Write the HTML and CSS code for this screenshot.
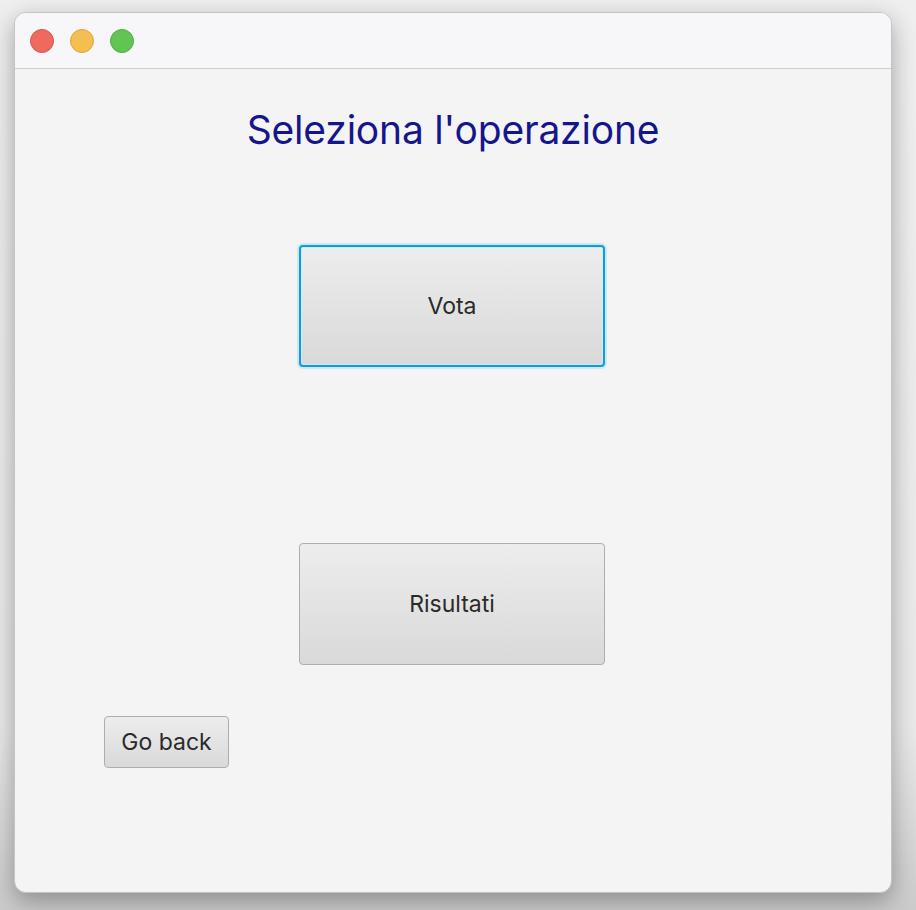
FILE: index.html
```html
<!DOCTYPE html>
<html lang="it">
<head>
<meta charset="utf-8">
<title>Seleziona l'operazione</title>
<link rel="stylesheet" href="styles.css">
</head>
<body>
<div class="window">
  <div class="titlebar">
    <span class="light red"></span>
    <span class="light yellow"></span>
    <span class="light green"></span>
  </div>
  <div class="content">
    <h1 class="heading">Seleziona l'operazione</h1>
    <button class="btn big focused">Vota</button>
    <button class="btn big second">Risultati</button>
    <button class="btn small">Go back</button>
  </div>
</div>
</body>
</html>
```
FILE: styles.css
```css
html, body {
  margin: 0;
  padding: 0;
}
body {
  width: 916px;
  height: 910px;
  overflow: hidden;
  background: linear-gradient(180deg, #efefef 0%, #e9e9e9 80%, #cbcbcb 100%);
  font-family: Inter, "Open Sans", sans-serif;
}
.window {
  margin: 12px 0 0 14px;
  width: 878px;
  height: 881px;
  border-radius: 12px;
  overflow: hidden;
  background: #f4f4f4;
  box-sizing: border-box;
  border: 1px solid #c4c4c4;
  box-shadow: 0 8px 24px rgba(0,0,0,0.32);
  display: flex;
  flex-direction: column;
}
.titlebar {
  height: 56px;
  flex: none;
  box-sizing: border-box;
  background: #f7f6f8;
  border-bottom: 1px solid #cfcfcf;
  display: flex;
  align-items: center;
  padding-left: 15px;
  gap: 16px;
}
.light {
  width: 24px;
  height: 24px;
  border-radius: 50%;
  box-sizing: border-box;
}
.red { background: #ee6a5f; border: 1px solid #d9544a; }
.yellow { background: #f6be50; border: 1px solid #dea53a; }
.green { background: #61c554; border: 1px solid #4caf40; }
.content {
  flex: 1;
  display: flex;
  flex-direction: column;
  align-items: center;
}
.heading {
  margin: 37px 0 0 0;
  font-weight: 400;
  font-size: 39px;
  line-height: 48px;
  color: #16168c;
  letter-spacing: -0.2px;
}
.btn {
  font-family: Inter, "Open Sans", sans-serif;
  color: #2a2a2a;
  background: linear-gradient(180deg, #ededed 0%, #d9d9d9 100%);
  border: 1px solid #adadad;
  border-radius: 4px;
  box-sizing: border-box;
  padding: 0;
  cursor: default;
}
.big {
  width: 306px;
  height: 122px;
  font-size: 23px;
  margin-right: 2px;
}
.focused {
  margin-top: 91px;
  border: 2px solid #0a9fd8;
  box-shadow: 0 0 0 2px rgba(120, 200, 230, 0.3), inset 0 0 0 1px #d6e7ee;
}
.second {
  margin-top: 176px;
}
.small {
  align-self: flex-start;
  margin: 51px 0 0 89px;
  width: 125px;
  height: 52px;
  font-size: 23px;
}
```
